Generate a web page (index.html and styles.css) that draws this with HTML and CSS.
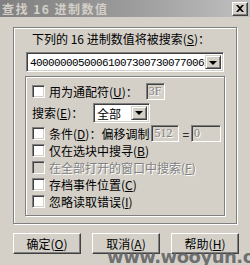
FILE: index.html
```html
<!DOCTYPE html>
<html lang="zh">
<head>
<meta charset="utf-8">
<link rel="stylesheet" href="styles.css">
</head>
<body>
<div class="window">
  <div class="titlebar">
    <span class="title">查找 16 进制数值</span>
    <span class="close">
      <svg width="8" height="7" viewBox="0 0 8 7"><path d="M0 0h2l2 2 2-2h2L5 3.5 8 7H6L4 5 2 7H0l3-3.5z" fill="#000"/></svg>
    </span>
  </div>
  <div class="content">
    <div class="frame">
      <div class="label">下列的 16 进制数值将被搜索(<u>S</u>)：</div>
      <div class="combo wide">
        <span class="combo-text mono">400000005000610073007300770061</span>
        <span class="drop"><i></i></span>
      </div>
      <div class="group">
        <div class="row r1">
          <span class="check"></span>
          <span class="txt">用为通配符(<u>U</u>)：</span>
          <span class="edit small disabled">3F</span>
        </div>
        <div class="row r2">
          <span class="txt">搜索(<u>E</u>)：</span>
          <div class="combo narrow">
            <span class="combo-text">全部</span>
            <span class="drop"><i></i></span>
          </div>
        </div>
        <div class="row r3">
          <span class="check"></span>
          <span class="txt">条件(<u>D</u>)：偏移调制</span>
          <span class="edit e512 disabled">512</span>
          <span class="eq">=</span>
          <span class="edit e0 disabled">0</span>
        </div>
        <div class="row">
          <span class="check"></span>
          <span class="txt">仅在选块中搜寻(<u>B</u>)</span>
        </div>
        <div class="row dis">
          <span class="check off"></span>
          <span class="txt grey">在全部打开的窗口中搜索(<u>F</u>)</span>
        </div>
        <div class="row">
          <span class="check"></span>
          <span class="txt">存档事件位置(<u>C</u>)</span>
        </div>
        <div class="row">
          <span class="check"></span>
          <span class="txt">忽略读取错误(<u>I</u>)</span>
        </div>
      </div>
    </div>
    <div class="buttons">
      <span class="btn b1">确定(<u>O</u>)</span>
      <span class="btn b2">取消(<u>A</u>)</span>
      <span class="btn b3">帮助(<u>H</u>)</span>
    </div>
  </div>
  <div class="watermark">www.wooyun.org</div>
</div>
</body>
</html>
```

FILE: styles.css
```css
* { box-sizing: border-box; }
html, body { margin: 0; padding: 0; background: #d4d0c8; }
body { font-family: "Noto Sans CJK SC", "Noto Sans", sans-serif; font-size: 12px; color: #000; }
u { text-decoration: underline; }

.window {
  position: relative;
  width: 250px;
  height: 265px;
  overflow: hidden;
  background: #d4d0c8;
}

.titlebar {
  height: 17px;
  display: flex;
  align-items: center;
  justify-content: space-between;
  padding: 0 2px 0 2px;
  background: linear-gradient(to right, #808080 0%, #9a9a9a 50%, #c0c0c0 100%);
}
.title {
  color: #d4d0c8;
  font-weight: bold;
  font-size: 12px;
  line-height: 14px;
  letter-spacing: 1.5px;
}
.close {
  width: 16px;
  height: 14px;
  display: flex;
  align-items: center;
  justify-content: center;
  background: #d4d0c8;
  border: 1px solid;
  border-color: #fff #404040 #404040 #fff;
  box-shadow: inset -1px -1px 0 #808080;
}

.content { padding: 10px 0 0 13px; }

.frame {
  width: 224px;
  height: 197px;
  border: 1px solid #808080;
  box-shadow: inset 1px 1px 0 #fff, 1px 1px 0 #fff;
  padding: 3px 11px 0 11px;
}
.label { margin-left: 7px; line-height: 16px; height: 16px; }

.combo {
  display: flex;
  background: #fff;
  border: 1px solid;
  border-color: #808080 #fff #fff #808080;
  box-shadow: inset 1px 1px 0 #404040, inset -1px -1px 0 #d4d0c8;
  padding: 2px;
  align-items: stretch;
}
.combo.wide { width: 198px; height: 20px; margin: 5px 0 0 1px; }
.combo-text { flex: 1; overflow: hidden; white-space: nowrap; line-height: 16px; padding-left: 1px; }
.mono { font-family: "Liberation Mono", monospace; font-size: 11px; letter-spacing: -0.6px; }
.drop {
  width: 16px;
  background: #d4d0c8;
  border: 1px solid;
  border-color: #d4d0c8 #404040 #404040 #d4d0c8;
  box-shadow: inset 1px 1px 0 #fff, inset -1px -1px 0 #808080;
  display: flex;
  align-items: center;
  justify-content: center;
}
.drop i {
  width: 0; height: 0;
  border-left: 4px solid transparent;
  border-right: 4px solid transparent;
  border-top: 4px solid #000;
  margin-top: 1px;
}

.group {
  margin-top: 4px;
  width: 200px;
  height: 140px;
  border: 1px solid #808080;
  box-shadow: inset 1px 1px 0 #fff, 1px 1px 0 #fff;
  padding: 6px 0 0 6px;
}
.row {
  display: flex;
  align-items: center;
  height: 17px;
}
.check {
  width: 13px;
  height: 13px;
  background: #fff;
  border: 1px solid;
  border-color: #808080 #fff #fff #808080;
  box-shadow: inset 1px 1px 0 #404040, inset -1px -1px 0 #d4d0c8;
  margin-right: 4px;
  flex: none;
}
.check.off { background: #d4d0c8; }
.txt { line-height: 16px; white-space: nowrap; }
.grey { color: #808080; text-shadow: 1px 1px 0 #fff; }

.r1 { height: 17px; }
.r2 { height: 21px; margin-top: 2px; }
.r2 .txt { margin-left: 0; width: 61px; }
.combo.narrow { width: 57px; height: 20px; }
.r3 { margin-top: 2px; }

.edit {
  height: 17px;
  border: 1px solid;
  border-color: #808080 #fff #fff #808080;
  box-shadow: inset 1px 1px 0 #404040, inset -1px -1px 0 #d4d0c8;
  color: #808080;
  text-shadow: 1px 1px 0 #fff;
  font-size: 12px;
  line-height: 15px;
  padding-left: 2px;
  font-family: "Liberation Serif", serif;
}
.edit.small { width: 19px; margin-left: 8px; }
.e512 { width: 28px; margin-left: 2px; }
.eq { margin: 0 2px 0 3px; }
.e0 { width: 30px; }

.buttons {
  display: flex;
  gap: 11px;
  margin-top: 9px;
}
.btn {
  width: 68px;
  height: 21px;
  display: flex;
  align-items: center;
  justify-content: center;
  background: #d4d0c8;
  border: 1px solid;
  border-color: #fff #404040 #404040 #fff;
  box-shadow: inset -1px -1px 0 #808080;
  line-height: 16px;
}

.watermark {
  position: absolute;
  left: 107px;
  top: 246px;
  font-family: "DejaVu Sans", sans-serif;
  font-weight: bold;
  font-size: 18px;
  color: rgba(90, 94, 96, 0.85);
  letter-spacing: -0.5px;
  white-space: nowrap;
}
```
